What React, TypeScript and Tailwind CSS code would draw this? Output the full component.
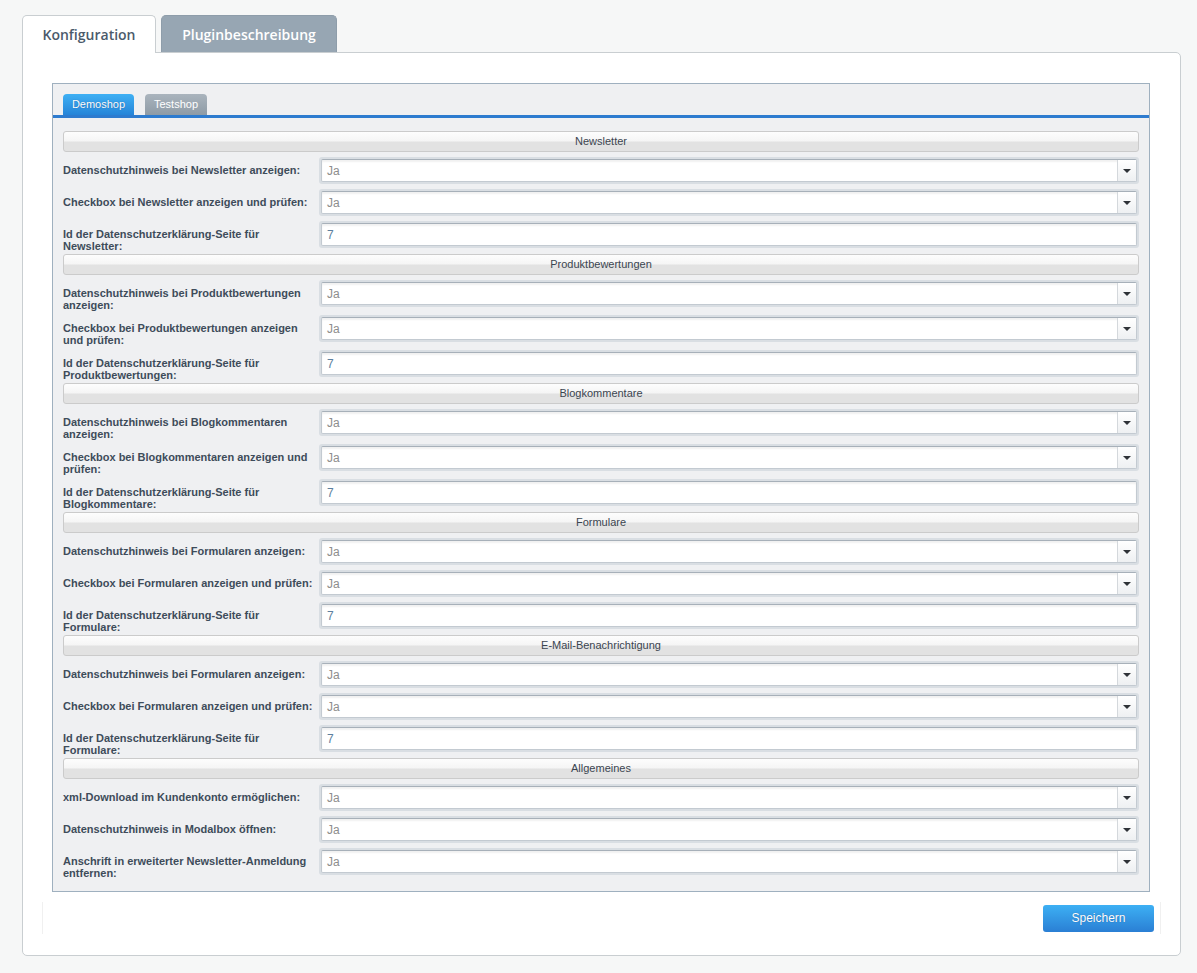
import React from "react";

type Row = { label: string; kind: "select" | "text"; value: string };
type Section = { title: string; rows: Row[] };

const sel = (label: string): Row => ({ label, kind: "select", value: "Ja" });
const txt = (label: string): Row => ({ label, kind: "text", value: "7" });

const sections: Section[] = [
  {
    title: "Newsletter",
    rows: [
      sel("Datenschutzhinweis bei Newsletter anzeigen:"),
      sel("Checkbox bei Newsletter anzeigen und prüfen:"),
      txt("Id der Datenschutzerklärung-Seite für Newsletter:"),
    ],
  },
  {
    title: "Produktbewertungen",
    rows: [
      sel("Datenschutzhinweis bei Produktbewertungen anzeigen:"),
      sel("Checkbox bei Produktbewertungen anzeigen und prüfen:"),
      txt("Id der Datenschutzerklärung-Seite für Produktbewertungen:"),
    ],
  },
  {
    title: "Blogkommentare",
    rows: [
      sel("Datenschutzhinweis bei Blogkommentaren anzeigen:"),
      sel("Checkbox bei Blogkommentaren anzeigen und prüfen:"),
      txt("Id der Datenschutzerklärung-Seite für Blogkommentare:"),
    ],
  },
  {
    title: "Formulare",
    rows: [
      sel("Datenschutzhinweis bei Formularen anzeigen:"),
      sel("Checkbox bei Formularen anzeigen und prüfen:"),
      txt("Id der Datenschutzerklärung-Seite für Formulare:"),
    ],
  },
  {
    title: "E-Mail-Benachrichtigung",
    rows: [
      sel("Datenschutzhinweis bei Formularen anzeigen:"),
      sel("Checkbox bei Formularen anzeigen und prüfen:"),
      txt("Id der Datenschutzerklärung-Seite für Formulare:"),
    ],
  },
  {
    title: "Allgemeines",
    rows: [
      sel("xml-Download im Kundenkonto ermöglichen:"),
      sel("Datenschutzhinweis in Modalbox öffnen:"),
      sel("Anschrift in erweiterter Newsletter-Anmeldung entfernen:"),
    ],
  },
];

function Field({ row }: { row: Row }) {
  return (
    <div className="mb-[5px] h-[27px] flex-1 rounded-[3px] bg-[#d9dee3] p-[2px]">
      <div className="flex h-full items-stretch rounded-[2px] border border-[#c3cad1] border-t-[#a7b0b9] bg-white shadow-[inset_0_2px_2px_rgba(0,0,0,0.06)]">
        <span
          className={
            row.kind === "select"
              ? "flex flex-1 items-center pl-[5px] text-[12px] text-[#8d8d8d]"
              : "flex flex-1 items-center pl-[5px] text-[12px] text-[#5d7f9e]"
          }
        >
          {row.value}
        </span>
        {row.kind === "select" && (
          <span className="flex w-[19px] items-center justify-center border-l border-[#d4d8dc] bg-[linear-gradient(to_bottom,#ffffff,#eef0f2)]">
            <span className="h-0 w-0 border-x-[4px] border-t-[4px] border-x-transparent border-t-[#2f3338]" />
          </span>
        )}
      </div>
    </div>
  );
}

export default function App() {
  return (
    <div className="min-h-[973px] bg-[#f6f7f7] pl-[22px] pr-[16px] pt-[15px] font-['Liberation_Sans',Arial,sans-serif]">
      <div className="flex items-end gap-[5px]">
        <div className="relative z-10 -mb-px flex h-[38px] w-[134px] items-center justify-center rounded-t-[5px] border border-b-0 border-[#c9ced1] bg-white font-['Open_Sans',sans-serif] text-[14px] font-semibold text-[#4b5a6b]">
          Konfiguration
        </div>
        <div className="flex h-[37px] w-[176px] items-center justify-center rounded-t-[5px] border border-b-0 border-[#8e9daa] bg-[#97a6b3] font-['Open_Sans',sans-serif] text-[14px] font-semibold text-white">
          Pluginbeschreibung
        </div>
      </div>

      <div className="flex h-[904px] flex-col rounded-b-[5px] rounded-tr-[5px] border border-[#c9ced1] bg-white pl-[29px] pr-[30px] pt-[30px]">
        <div className="border border-[#9fb0bf] bg-[#eff0f2]">
          <div className="flex items-end gap-[11px] pl-[10px] pt-[10px]">
            <div className="flex h-[21px] w-[71px] items-center justify-center rounded-t-[4px] bg-[linear-gradient(to_bottom,#3eb0f4,#2584d8)] text-[11px] text-white [text-shadow:0_0_1px_rgba(0,40,100,0.5)]">
              Demoshop
            </div>
            <div className="flex h-[21px] w-[62px] items-center justify-center rounded-t-[4px] bg-[linear-gradient(to_bottom,#aab4bd,#8e9ba6)] text-[11px] text-white">
              Testshop
            </div>
          </div>
          <div className="h-[3px] bg-[#2d7bcf]" />

          <div className="px-[10px] pb-[8px] pt-[13px]">
            {sections.map((s, i) => (
              <div key={i}>
                <div
                  className={
                    (i === 0 ? "" : "mt-[1px] ") +
                    "mb-[5px] flex h-[21px] items-center justify-center rounded-[3px] border border-[#cbcbcb] bg-[linear-gradient(to_bottom,#fdfdfd_0%,#f5f5f5_48%,#e2e2e2_52%,#e2e2e2_100%)] text-[11px] text-[#3b4550]"
                  }
                >
                  {s.title}
                </div>
                {s.rows.map((r, j) => (
                  <div key={j} className="flex items-start">
                    <div
                      className={
                        r.kind === "select"
                          ? "w-[256px] shrink-0 pb-[4px] pr-[4px] pt-[7px] text-[11px] font-bold leading-[12px] text-[#3e4c5a]"
                          : "w-[256px] shrink-0 pb-[1px] pr-[4px] pt-[7px] text-[11px] font-bold leading-[12px] text-[#3e4c5a]"
                      }
                    >
                      {r.label}
                    </div>
                    <Field row={r} />
                  </div>
                ))}
              </div>
            ))}
          </div>
        </div>

        <div className="ml-[-10px] mr-[-11px] mt-[10px] flex h-[32px] items-center justify-end border-x border-[#f0f0f0] pr-[6px]">
          <button className="h-[27px] w-[111px] rounded-[3px] bg-[linear-gradient(to_bottom,#3db0f4,#2a7fd4)] text-[12px] text-white [text-shadow:0_0_1px_rgba(0,40,100,0.5)]">
            Speichern
          </button>
        </div>
      </div>
    </div>
  );
}
